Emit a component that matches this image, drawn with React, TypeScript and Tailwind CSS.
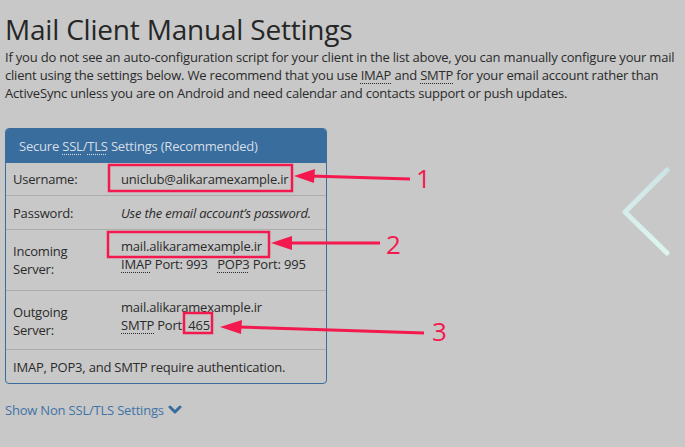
import React from "react";

const Abbr = ({ children }: { children: React.ReactNode }) => (
  <span className="underline decoration-dotted decoration-1 underline-offset-[3px]">{children}</span>
);

export default function App() {
  return (
    <div
      className="relative w-[685px] h-[447px] overflow-hidden bg-[#c8c8c8] text-[#2b2b2b]"
      style={{ fontFamily: "'Open Sans', 'Liberation Sans', sans-serif" }}
    >
      <div className="px-[5px] pt-[10px]">
        <h1 className="text-[28px] leading-[38px] font-normal tracking-[-0.2px] text-[#262626]">Mail Client Manual Settings</h1>
        <p className="text-[13px] leading-[18px] tracking-[-0.2px]">
          If you do not see an auto-configuration script for your client in the list above, you can manually configure your mail
          client using the settings below. We recommend that you use <Abbr>IMAP</Abbr> and <Abbr>SMTP</Abbr> for your email account rather than
          ActiveSync unless you are on Android and need calendar and contacts support or push updates.
        </p>

        <div className="mt-[26px] w-[322px] rounded-[4px] border border-[#3a6d9c] text-[13px] leading-[18px] tracking-[-0.2px]">
          <div className="h-[34px] flex items-center px-[13px] bg-[#386d9e] text-[#d6dee6] rounded-t-[3px]">
            Secure&nbsp;<Abbr>SSL</Abbr>/<Abbr>TLS</Abbr>&nbsp;Settings (Recommended)
          </div>
          <div className="flex h-[33px] items-center border-b border-[#acacac]">
            <div className="w-[115px] pl-[7px]">Username:</div>
            <div>uniclub@alikaramexample.ir</div>
          </div>
          <div className="flex h-[34px] items-center border-b border-[#acacac]">
            <div className="w-[115px] pl-[7px]">Password:</div>
            <div className="italic">Use the email account’s password.</div>
          </div>
          <div className="flex h-[61px] border-b border-[#acacac] pt-[7px]">
            <div className="w-[115px] pl-[7px] pt-[5px]">Incoming<br />Server:</div>
            <div>
              <div>mail.alikaramexample.ir</div>
              <div>
                <Abbr>IMAP</Abbr> Port: 993&nbsp;&nbsp;&nbsp;<Abbr>POP3</Abbr> Port: 995
              </div>
            </div>
          </div>
          <div className="flex h-[59px] border-b border-[#acacac] pt-[7px]">
            <div className="w-[115px] pl-[7px] pt-[5px]">Outgoing<br />Server:</div>
            <div>
              <div>mail.alikaramexample.ir</div>
              <div>
                <Abbr>SMTP</Abbr> Port: 465
              </div>
            </div>
          </div>
          <div className="flex h-[33px] items-center pl-[7px]">IMAP, POP3, and SMTP require authentication.</div>
        </div>

        <div className="mt-[17px] flex items-center gap-[4px] text-[13px] leading-[18px] tracking-[-0.2px] text-[#3f73a6]">
          <span>Show Non SSL/TLS Settings</span>
          <svg width="14" height="10" viewBox="0 0 14 10">
            <path d="M2 2 L7 7 L12 2" fill="none" stroke="#3a6d9c" strokeWidth="3" strokeLinecap="round" strokeLinejoin="round" />
          </svg>
        </div>
      </div>

      {/* Annotations overlay */}
      <svg className="absolute left-0 top-0 pointer-events-none" width="685" height="447" viewBox="0 0 685 447">
        <defs>
          <linearGradient id="chev" x1="0" y1="0" x2="0" y2="1">
            <stop offset="0" stopColor="#cde4e4" />
            <stop offset="1" stopColor="#dcf6ef" />
          </linearGradient>
        </defs>
        <g fill="none" stroke="#f3194e" strokeWidth="2.5">
          <rect x="109" y="165" width="183" height="26" />
          <rect x="108" y="232" width="161" height="25" />
          <rect x="184" y="313" width="28" height="20" />
        </g>
        <g stroke="#f3194e" strokeWidth="3" fill="#f3194e">
          <line x1="310" y1="176" x2="410" y2="179" />
          <polygon points="294,176 315,169 314,183" stroke="none" />
          <line x1="290" y1="243" x2="380" y2="243" />
          <polygon points="271,243 292,236 292,250" stroke="none" />
          <line x1="238" y1="327" x2="424" y2="333" />
          <polygon points="220,327 242,320 241,334" stroke="none" />
        </g>
        <g fill="#f3194e" fontFamily="'Open Sans', sans-serif" fontSize="26">
          <text x="416" y="188">1</text>
          <text x="386" y="254">2</text>
          <text x="432" y="341">3</text>
        </g>
        <path d="M667 170 L625 212 L667 253" fill="none" stroke="url(#chev)" strokeWidth="5" strokeLinecap="round" strokeLinejoin="round" />
      </svg>
    </div>
  );
}
